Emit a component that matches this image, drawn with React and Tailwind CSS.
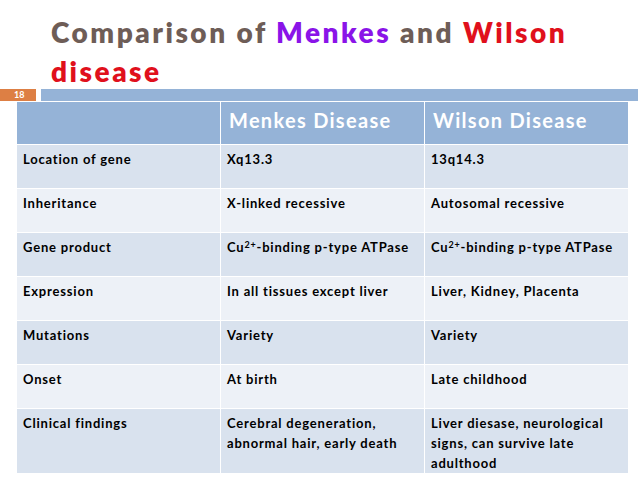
import React from 'react';

const rows = [
  ['Location of gene', 'Xq13.3', '13q14.3'],
  ['Inheritance', 'X-linked recessive', 'Autosomal recessive'],
  [
    'Gene product',
    <>Cu<sup className="text-[9px]">2+</sup>-binding p-type ATPase</>,
    <>Cu<sup className="text-[9px]">2+</sup>-binding p-type ATPase</>,
  ],
  ['Expression', 'In all tissues except liver', 'Liver, Kidney, Placenta'],
  ['Mutations', 'Variety', 'Variety'],
  ['Onset', 'At birth', 'Late childhood'],
  [
    'Clinical findings',
    'Cerebral degeneration, abnormal hair, early death',
    'Liver diesase, neurological signs, can survive late adulthood',
  ],
];

export default function App() {
  return (
    <div className="w-[638px] h-[479px] bg-white overflow-hidden font-['Lato',sans-serif]">
      {/* Title */}
      <div className="pl-[51px] pt-[13px] h-[89px]">
        <h1 className="text-[28px] leading-[39px] font-extrabold text-[#6e5d57] tracking-[2.5px]">
          Comparison of <span className="text-[#8a14e8]">Menkes</span> and{' '}
          <span className="text-[#e0101c]">Wilson</span>
          <br />
          <span className="text-[#e0101c]">disease</span>
        </h1>
      </div>

      {/* Slide number + bar */}
      <div className="flex h-[12px] gap-[5px]">
        <div className="w-[36px] bg-[#dd7f44] text-white text-[9px] leading-[12px] font-bold pl-[14px]">
          18
        </div>
        <div className="flex-1 bg-[#95b3d7]" />
      </div>

      {/* Table */}
      <table className="ml-[16px] w-[612px] border-collapse table-fixed text-[13px] font-bold text-black">
        <thead>
          <tr className="bg-[#95b3d7] h-[43px]">
            <th className="w-[204px] border border-white" />
            <th className="w-[204px] border border-white text-left align-middle pl-[8px] pb-[6px] text-[20px] font-bold text-white tracking-[1.3px]">
              Menkes Disease
            </th>
            <th className="w-[204px] border border-white text-left align-middle pl-[8px] pb-[6px] text-[20px] font-bold text-white tracking-[1.3px]">
              Wilson Disease
            </th>
          </tr>
        </thead>
        <tbody>
          {rows.map((r, i) => (
            <tr
              key={i}
              className={`${i % 2 === 0 ? 'bg-[#d9e2ee]' : 'bg-[#edf1f7]'} ${i === 6 ? 'h-[63px]' : 'h-[44px]'}`}
            >
              {r.map((c, j) => (
                <td
                  key={j}
                  className="border border-white align-top px-[6px] pt-[4px] leading-[20px] tracking-[0.8px]"
                >
                  {c}
                </td>
              ))}
            </tr>
          ))}
        </tbody>
      </table>
    </div>
  );
}
